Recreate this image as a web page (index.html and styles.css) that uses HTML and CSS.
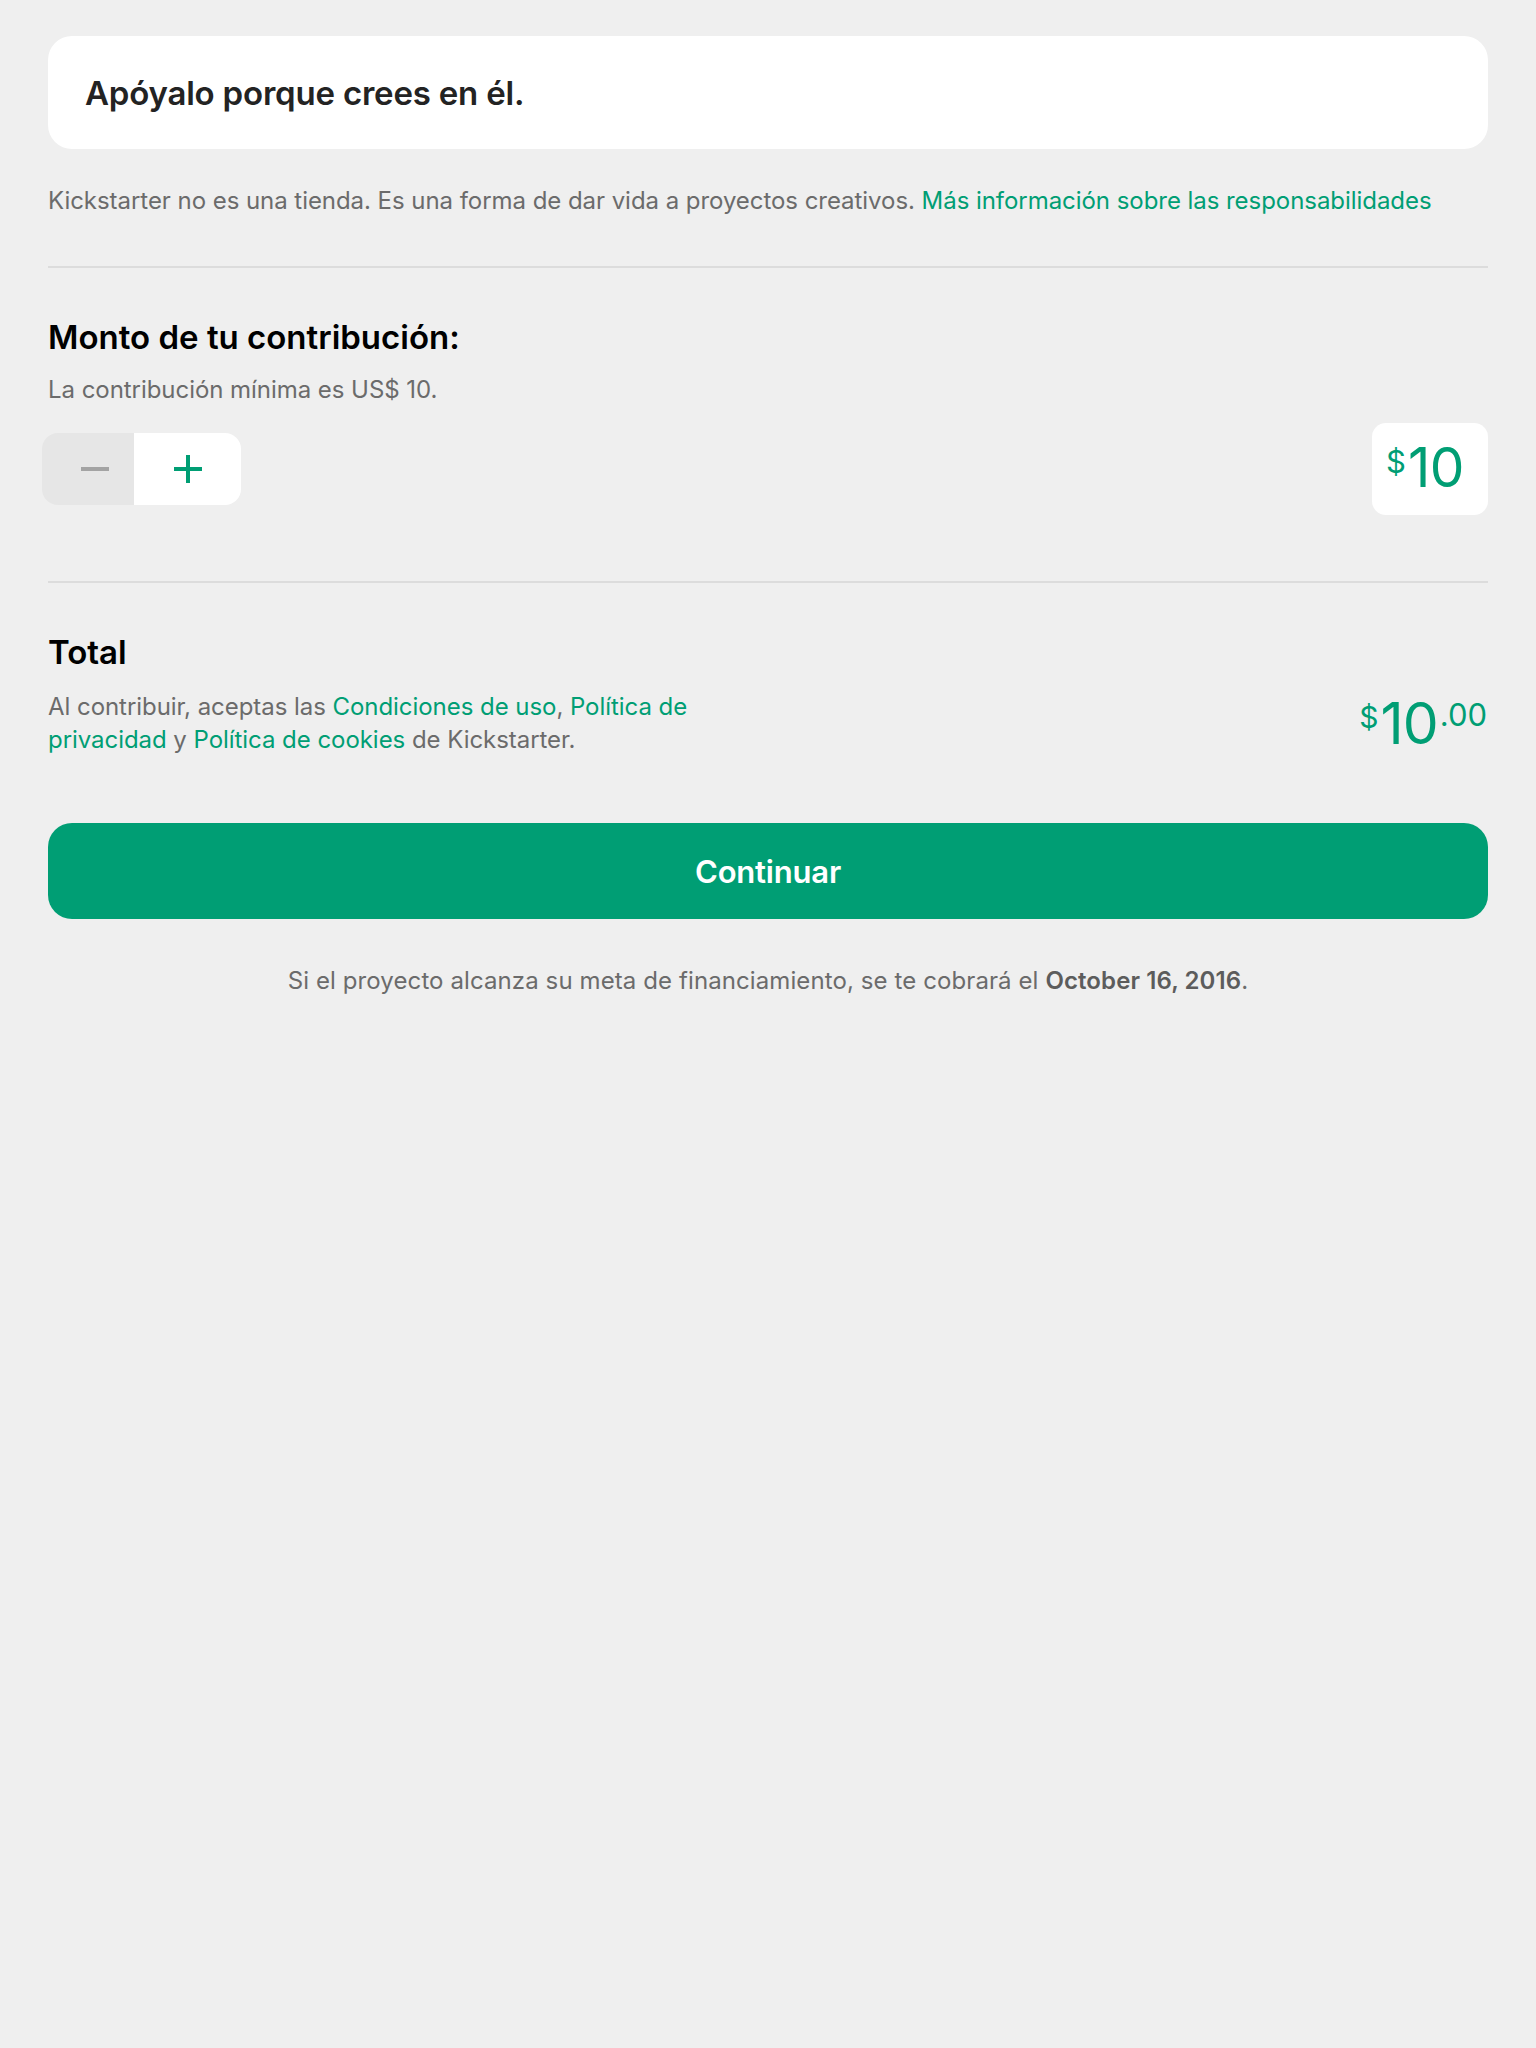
FILE: index.html
```html
<!DOCTYPE html>
<html lang="es">
<head>
<meta charset="utf-8">
<title>Contribución</title>
<link rel="stylesheet" href="styles.css">
</head>
<body>
<main class="page">
  <div class="card">
    <h1 class="card-title">Apóyalo porque crees en él.</h1>
  </div>
  <p class="notice">Kickstarter no es una tienda. Es una forma de dar vida a proyectos creativos. <a class="link" href="#">Más información sobre las responsabilidades</a></p>
  <hr class="divider divider-first">

  <section class="amount-section">
    <h2 class="heading">Monto de tu contribución:</h2>
    <p class="sub">La contribución mínima es US$ 10.</p>
    <div class="stepper-row">
      <div class="stepper">
        <button class="step step-minus" aria-label="Menos">
          <svg width="28" height="28" viewBox="0 0 28 28"><rect x="0" y="12" width="28" height="4" fill="#a3a3a3"/></svg>
        </button>
        <button class="step step-plus" aria-label="Más">
          <svg width="28" height="28" viewBox="0 0 28 28"><rect x="0" y="12" width="28" height="4" fill="#009e74"/><rect x="12" y="0" width="4" height="28" fill="#009e74"/></svg>
        </button>
      </div>
      <div class="amount-box">
        <span class="amt-cur">$</span><span class="amt-val">10</span>
      </div>
    </div>
  </section>

  <hr class="divider divider-second">

  <section class="total-section">
    <h2 class="heading">Total</h2>
    <div class="total-row">
      <p class="terms">Al contribuir, aceptas las <a class="link" href="#">Condiciones de uso</a>, <a class="link" href="#">Política de privacidad</a> y <a class="link" href="#">Política de cookies</a> de Kickstarter.</p>
      <div class="total-amount">
        <span class="tot-cur">$</span><span class="tot-val">10</span><span class="tot-dec">.00</span>
      </div>
    </div>
  </section>

  <button class="continue">Continuar</button>
  <p class="footer-note">Si el proyecto alcanza su meta de financiamiento, se te cobrará el <strong>October 16, 2016</strong>.</p>
</main>
</body>
</html>
```

FILE: styles.css
```css
* { box-sizing: border-box; }
html, body {
  margin: 0;
  padding: 0;
  background: #efefef;
}
body {
  font-family: "Inter", "Noto Sans", sans-serif;
  width: 1536px;
  min-height: 2048px;
}
.page {
  padding: 36px 48px 0 48px;
}
.card {
  height: 113px;
  background: #ffffff;
  border-radius: 24px;
  padding-left: 37px;
  display: flex;
  align-items: center;
}
.card-title {
  margin: 0;
  font-size: 33px;
  font-weight: 600;
  color: #232323;
  letter-spacing: -0.2px;
  line-height: 40px;
}
.notice {
  margin: 35px 0 0 0;
  font-size: 24px;
  line-height: 34px;
  color: #6b6b6b;
  letter-spacing: -0.05px;
}
.link {
  color: #009e74;
  text-decoration: none;
}
.divider {
  border: 0;
  height: 2px;
  background: #dcdcdc;
  margin: 0;
}
.divider-first { margin-top: 48px; }
.divider-second { margin-top: 66px; }
.heading {
  margin: 49px 0 0 0;
  font-size: 33px;
  line-height: 40px;
  font-weight: 600;
  color: #000;
  letter-spacing: 0;
}
.sub {
  margin: 16px 0 0 0;
  font-size: 24px;
  line-height: 34px;
  color: #6b6b6b;
  letter-spacing: -0.05px;
}
.stepper-row {
  margin-top: 16px;
  height: 92px;
  display: flex;
  align-items: center;
  justify-content: space-between;
}
.stepper {
  display: flex;
  height: 72px;
  margin-left: -6px;
  border-radius: 16px;
  overflow: hidden;
}
.step {
  border: 0;
  padding: 0;
  margin: 0;
  height: 72px;
  display: flex;
  align-items: center;
  justify-content: center;
}
.step svg { display: block; }
.step-minus {
  width: 92px;
  padding-left: 13px;
  background: #e6e6e6;
}
.step-plus {
  width: 107px;
  background: #ffffff;
}
.amount-box {
  width: 116px;
  height: 92px;
  background: #fff;
  border-radius: 14px;
  display: flex;
  align-items: flex-start;
  padding: 17px 0 0 14px;
  color: #009e74;
}
.amt-cur {
  font-size: 31px;
  line-height: 31px;
  margin-top: 6px;
  margin-right: 2px;
}
.amt-val {
  font-size: 55px;
  line-height: 55px;
  letter-spacing: -0.5px;
}
.total-row {
  margin-top: 18px;
  display: flex;
  justify-content: space-between;
  align-items: flex-start;
}
.terms {
  margin: 0;
  width: 700px;
  font-size: 24px;
  line-height: 33px;
  color: #6b6b6b;
  letter-spacing: -0.05px;
}
.total-amount {
  display: flex;
  align-items: flex-start;
  color: #009e74;
  margin-top: 5px;
  margin-right: 1px;
}
.tot-cur {
  font-size: 30px;
  line-height: 30px;
  margin-top: 7px;
  margin-right: 2px;
}
.tot-val {
  font-size: 57px;
  line-height: 57px;
  letter-spacing: -1px;
}
.tot-dec {
  font-size: 31px;
  line-height: 31px;
  margin-top: 4px;
  margin-left: 2px;
}
.continue {
  display: block;
  width: 100%;
  height: 96px;
  margin-top: 67px;
  border: 0;
  border-radius: 24px;
  background: #009e74;
  color: #fff;
  font-family: "Inter", "Noto Sans", sans-serif;
  font-size: 31px;
  font-weight: 600;
  letter-spacing: -0.2px;
}
.footer-note {
  margin: 45px 0 0 0;
  text-align: center;
  font-size: 24px;
  line-height: 34px;
  color: #6b6b6b;
  letter-spacing: 0.1px;
}
.footer-note strong {
  font-weight: 600;
  color: #5c5c5c;
}
```
